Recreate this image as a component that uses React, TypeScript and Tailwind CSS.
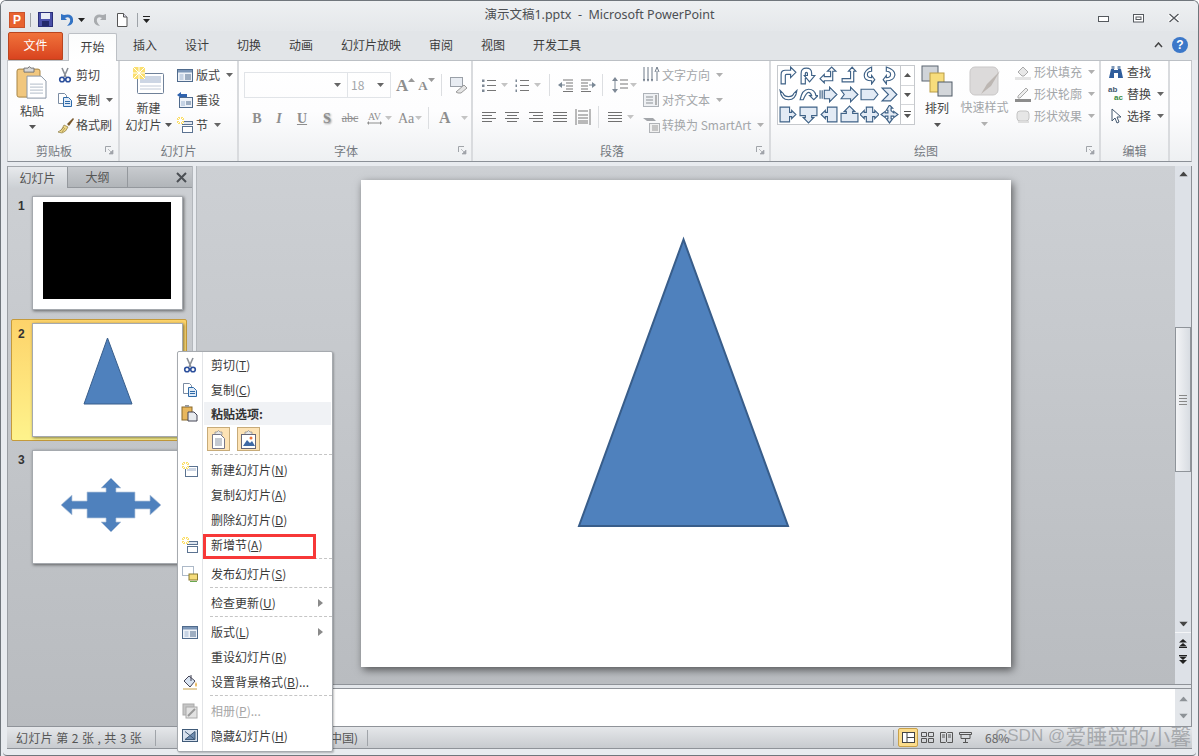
import React from "react";

const Caret = ({ c = "#555", cls = "" }: { c?: string; cls?: string }) => (
  <svg width="7" height="4" viewBox="0 0 7 4" className={`shrink-0 ${cls}`}><path d="M0 0h7L3.5 4z" fill={c} /></svg>
);

const Sv = ({ s = 16, w, h, vb, children, cls = "" }: { s?: number; w?: number; h?: number; vb?: string; children: React.ReactNode; cls?: string }) => (
  <svg width={w ?? s} height={h ?? s} viewBox={vb ?? `0 0 ${s} ${s}`} className={`shrink-0 ${cls}`}>{children}</svg>
);

const Cut = () => (
  <Sv>
    <path d="M5 1l4 9M11 1L7 10" stroke="#8a8f96" strokeWidth="1.6" fill="none" />
    <circle cx="5" cy="12.5" r="2.3" fill="none" stroke="#2b4f9c" strokeWidth="1.6" />
    <circle cx="11" cy="12.5" r="2.3" fill="none" stroke="#2b4f9c" strokeWidth="1.6" />
  </Sv>
);
const Copy = () => (
  <Sv>
    <path d="M1.5 1.5h6l2 2v8h-8z" fill="#fff" stroke="#7b8ca3" />
    <path d="M6.5 5.5h5l3 3v6h-8z" fill="#dfeaf7" stroke="#2e6aa8" />
    <path d="M8 9.5h5M8 11.5h5" stroke="#2e6aa8" />
  </Sv>
);
const Brush = () => (
  <Sv s={18}>
    <path d="M10 8l6-6 1 1-5 7z" fill="#7a5a2e" />
    <path d="M1 16q4-1 6-7l4 2q-2 5-6 6z" fill="#f0d98a" stroke="#8a7a40" strokeWidth=".7" />
    <path d="M3 15l4-4M5 16l3-4" stroke="#9a8440" strokeWidth=".7" />
  </Sv>
);
const Clip = ({ s = 32 }: { s?: number }) => (
  <Sv w={s} h={s * 1.1} vb="0 0 32 35">
    <rect x="1" y="4" width="23" height="28" rx="2" fill="#f1c77e" stroke="#a78544" />
    <path d="M8 3h4q1-3 3 0h3v4H8z" fill="#d8d8d8" stroke="#777" />
    <path d="M11 11h14l5 5v17H11z" fill="#fff" stroke="#8a96a5" />
    <path d="M14 19h13M14 22h13M14 25h13M14 28h13" stroke="#b3bcc8" />
  </Sv>
);
const Spark = ({ x = 0, y = 0, r = 6 }: { x?: number; y?: number; r?: number }) => (
  <g>
    <rect x={x} y={y} width={r * 2} height={r * 2} fill="#fbdf6e" />
    <path d={`M${x} ${y}l${r * 2} ${r * 2}M${x + r * 2} ${y}l${-r * 2} ${r * 2}M${x + r} ${y}v${r * 2}M${x} ${y + r}h${r * 2}`} stroke="#fff" />
  </g>
);
const NewSlideBig = () => (
  <Sv w={31} h={28} vb="0 0 31 28">
    <rect x="4.5" y="6.5" width="26" height="20" rx="1" fill="#fff" stroke="#6f8199" />
    <rect x="7" y="9" width="21" height="7" fill="#cdd6e4" />
    <path d="M7 19h21M7 22h21" stroke="#c3cbd8" />
    <Spark r={6} />
  </Sv>
);
const LayoutIc = () => (
  <Sv>
    <rect x=".5" y="2.5" width="15" height="12" fill="#eef2f8" stroke="#4f6a8c" />
    <path d="M1 3h14v2.5H1z" fill="#7d97b8" />
    <rect x="2.5" y="7" width="4" height="6" fill="#c6d3e4" />
    <path d="M8 8h6M8 10h6M8 12h6" stroke="#4f6a8c" />
  </Sv>
);
const ResetIc = () => (
  <Sv>
    <rect x="2.5" y="5.5" width="13" height="10" fill="#eef2f8" stroke="#4f6a8c" />
    <rect x="4" y="9" width="4" height="5" fill="#c6d3e4" />
    <path d="M9 10h5M9 12h5" stroke="#4f6a8c" />
    <path d="M0 3l4-3v2h6v3H4v1z" fill="#2e62ae" />
  </Sv>
);
const SectionIc = () => (
  <Sv>
    <rect x="5.5" y="4.5" width="10" height="3" fill="#dfe6f0" stroke="#5b7391" />
    <rect x="5.5" y="9.5" width="10" height="6" fill="#fff" stroke="#5b7391" />
    <Spark r={3.5} />
  </Sv>
);
const FileIc = () => (
  <Sv s={14}>
    <path d="M2.5.5h6l3.5 3.5v9.5h-9.5z" fill="#fff" stroke="#555" />
    <path d="M8.5.5V4H12" fill="#dde" stroke="#555" />
  </Sv>
);
const Lines = ({ kind, w = 14 }: { kind: "l" | "c" | "r" | "j"; w?: number }) => {
  const seq = [0, 1, 2, 3];
  return (
    <Sv w={w} h={10} vb={`0 0 ${w} 10`}>
      {seq.map((i) => {
        const short = i % 2 === 1;
        const len = kind === "j" || !short ? w : w - 4;
        const x = kind === "l" || kind === "j" ? 0 : kind === "r" ? w - len : (w - len) / 2;
        return <path key={i} d={`M${x} ${i * 3 + 0.5}h${len}`} stroke="#707070" />;
      })}
    </Sv>
  );
};
const Bul = ({ n }: { n?: boolean }) => (
  <Sv w={14} h={13} vb="0 0 14 13">
    {[1.5, 6.5, 11.5].map((y) => (
      <g key={y}>
        <rect x={n ? 0.5 : 0} y={y - 1} width={n ? 1.5 : 2.5} height={2.5} fill="#7d8895" />
        <path d={`M5 ${y}h9`} stroke="#777" />
      </g>
    ))}
  </Sv>
);
const Indent = ({ flip }: { flip?: boolean }) => (
  <Sv w={16} h={13} vb="0 0 16 13" cls={flip ? "-scale-x-100" : ""}>
    <path d="M5 1h10M8 4h7M8 7h7M8 10h7M5 12.5h10" stroke="#777" />
    <path d="M0 6l4-3v6z" fill="#7a8896" />
    <path d="M2 6h5" stroke="#7a8896" />
  </Sv>
);
const Gal: string[] = [
  "M2 17V8q0-4 4-4h5V1l5 5-5 5V8H7q-1 0-1 1v8z",
  "M2 17V7q0-5 5-5t5 5v2h3l-5 6-5-6h3V7q0-1-1-1t-1 1v10z",
  "M1 12l4-4v2h6V5H8l4-4 4 4h-3v9H5v2z",
  "M2 12h8V5H8l3.5-4L15 5h-2v10H2z",
  "M11 1v4Q7 5 7 8t4 3v-2l3 4-3 4v-3Q4 14 4 9t7-8z",
  "M6 1v4q4 0 4 3T6 11V9l-3 4 3 4v-3q7 0 8-5T6 1z",
  "M1 5q1 9 8 9t8-9l-3 3q-1 3-5 3T4 8z",
  "M1 14q2-10 8-10t7 6h2l-4 4-4-4h2q-1-3-3-3t-5 7z",
  "M1 5v8M3 5v8M5 5h5V2l7 7-7 7v-3H5z",
  "M1 5h9V2l7 7-7 7v-3H1l3-4z",
  "M1 4h12l4 5-4 5H1z",
  "M2 3h8l6 6-6 6H2l6-6z",
  "M1 2h9v5h2V5l4 4-4 4v-2h-2v5H1z",
  "M1 2h16v8h-5v2h2l-5 5-5-5h2v-2H1z",
  "M17 2H8v5H6V5L2 9l4 4v-2h2v5h9z",
  "M1 16h16V8h-5V6h2L9 1 4 6h2v2H1z",
  "M6 2h6v5h2V5l4 4-4 4v-2h-2v5H6v-5H4v2L0 9l4-4v2h2z",
  "M9 0l3 3h-1.5v2.5L13 7.500V6l4 3-4 3v-1.500h-2.500L10.500 13H12l-3 4-3-4h1.500v-2.500H5V12L1 9l4-3v1.500h2.500V5H6z",
];

const Launcher = () => (
  <svg width="9" height="9" viewBox="0 0 9 9" className="absolute right-[4px] top-[6px]">
    <path d="M.5 6V.5H6" stroke="#a0a4a9" fill="none" />
    <path d="M3 3l4 4M8 4v4H4z" stroke="#a0a4a9" fill="#a0a4a9" strokeWidth=".7" />
  </svg>
);

const Group = ({ w, label, launcher, children }: { w: string; label: string; launcher?: boolean; children: React.ReactNode }) => (
  <div className={`${w} shrink-0 flex flex-col border-r-2 border-[#d9dbde]`}>
    <div className="h-[80px] flex">{children}</div>
    <div className={`relative h-[21px] flex items-center justify-center text-[12px] text-[#74797f] ${launcher ? "pr-[18px]" : ""}`}>
      {label}
      {launcher && <Launcher />}
    </div>
  </div>
);

const RowBtn = ({ icon, label, caret, dis, iw = 19 }: { icon: React.ReactNode; label: string; caret?: boolean; dis?: boolean; iw?: number }) => (
  <div className={`h-[25px] flex items-center text-[12px] whitespace-nowrap ${dis ? "text-[#a3a6a9]" : "text-[#444]"}`}>
    <span style={{ width: iw }} className="flex items-center shrink-0">{icon}</span>
    <span>{label}</span>
    {caret && <Caret c={dis ? "#b0b0b0" : "#666"} cls="ml-[6px]" />}
  </div>
);

const U = ({ t, k, after = "" }: { t: string; k: string; after?: string }) => (
  <span>{t}(<span className="underline">{k}</span>){after}</span>
);

const Sep = () => <div className="h-[3px] ml-[32px] border-t border-dashed border-[#c5c5c5] mt-[1px]" />;

const MI = ({ h = "h-[25px]", icon, children, arrow, dis }: { h?: string; icon?: React.ReactNode; children: React.ReactNode; arrow?: boolean; dis?: boolean }) => (
  <div className={`${h} flex items-center text-[12px] ${dis ? "text-[#a6a6a6]" : "text-[#3a3a3a]"}`}>
    <span className="w-[23px] flex justify-center shrink-0">{icon}</span>
    <span className="ml-[10px] flex-1">{children}</span>
    {arrow && <svg width="5" height="8" viewBox="0 0 5 8" className="mr-[9px]"><path d="M0 0l5 4-5 4z" fill="#8a8a8a" /></svg>}
  </div>
);

const PasteOpt = ({ pic }: { pic?: boolean }) => (
  <span className="w-[23px] h-[24px] flex items-center justify-center bg-[#fde3b5] border border-[#c7ab79]">
    <svg width="17" height="21" viewBox="0 0 17 21">
      <path d="M5 3h2q1.500-3 3 0h2v3H5z" fill="#e4e4e4" stroke="#888" strokeWidth=".7" />
      {pic ? (
        <>
          <rect x="1.500" y="5.500" width="14" height="14" fill="#fff" stroke="#667" />
          <path d="M3 17l4-6 3 3 2-2 3 5z" fill="#3f6aa5" />
          <circle cx="11" cy="9" r="1.500" fill="#e8743b" />
        </>
      ) : (
        <>
          <path d="M2.500 5.500h8l4 4v10h-12z" fill="#fff" stroke="#778" />
          <path d="M5 10h7M5 12h7M5 14h7M5 16h7" stroke="#8a94a3" />
        </>
      )}
    </svg>
  </span>
);

const Thumb = ({ children }: { children: React.ReactNode }) => (
  <div className="ml-[20px] w-[151px] h-[114px] bg-white shadow-[1px_1px_3px_rgba(0,0,0,0.5)] border border-[#a5a9ae] flex items-center justify-center">
    {children}
  </div>
);

const Cross = () => (
  <svg width="100" height="54" viewBox="0 0 100 54" className="ml-[6px] mb-[4px]">
    <path d="M0 27L11 17v6h15V14h19V10h-5L50 0l10 10h-5v4h19v9h15v-6l11 10-11 10v-6H74v9H55v4h5L50 54 40 44h5v-4H26v-9H11v6z" fill="#4f81bd" stroke="#b9c8dc" strokeWidth=".7" />
  </svg>
);

export default function App() {
  return (
    <div className="relative w-[1199px] h-[756px] overflow-hidden bg-[#e8ebef] border-t border-x border-[#70767c] rounded-t-[6px] font-['Noto_Sans_CJK_SC','Liberation_Sans',sans-serif] flex flex-col">
      {/* title bar */}
      <div className="h-[30px] shrink-0 grid grid-cols-[1fr_auto_1fr] items-center bg-gradient-to-b from-[#eef0f2] to-[#e4e7ea]">
        <div className="flex items-center pl-[8px] pt-[7px]">
          <span className="w-[16px] h-[16px] bg-[#e8632f] border border-[#c9532a] text-white text-[12px] font-bold leading-[14px] text-center font-['Liberation_Sans',sans-serif]">P</span>
          <span className="w-px h-[14px] bg-[#9ea3a8] ml-[5px]" />
          <Sv s={15} cls="ml-[7px]">
            <rect x=".5" y=".5" width="14" height="14" fill="#4a50a8" stroke="#2a2f78" />
            <rect x="3" y="1" width="9" height="6" fill="#e9ecf5" />
            <rect x="4" y="9" width="7" height="5" fill="#23296a" />
          </Sv>
          <Sv w={14} h={14} vb="0 0 14 14" cls="ml-[7px]">
            <path d="M1 1v6h6L5 5q4-2 5 1t-3 7q7-1 6-7T4 2z" fill="#3273c4" />
          </Sv>
          <Caret c="#222" cls="ml-[4px]" />
          <Sv w={14} h={14} vb="0 0 14 14" cls="ml-[8px] -scale-x-100">
            <path d="M1 1v6h6L5 5q4-2 5 1t-3 7q7-1 6-7T4 2z" fill="#a8abae" />
          </Sv>
          <span className="ml-[8px] flex"><FileIc /></span>
          <span className="w-px h-[14px] bg-[#9ea3a8] ml-[8px]" />
          <Sv w={7} h={7} vb="0 0 7 7" cls="ml-[5px]"><path d="M0 0h7v1H0zM0 3h7L3.500 7z" fill="#222" /></Sv>
        </div>
        <div className="text-[12.5px] text-[#4c4f53] pb-[1px] font-['Noto_Sans','Noto_Sans_CJK_SC',sans-serif] whitespace-pre">演示文稿1.pptx  -  Microsoft PowerPoint</div>
        <div className="flex items-center justify-end pr-[18px] pt-[4px] gap-[24px]">
          <svg width="11" height="7" viewBox="0 0 11 7" className="mt-[3px]"><rect x=".5" y=".5" width="10" height="5" fill="#fff" stroke="#55595e" /></svg>
          <svg width="11" height="9" viewBox="0 0 11 9"><rect x=".5" y=".5" width="10" height="7.500" fill="#fff" stroke="#55595e" /><rect x="3" y="3" width="5" height="2.500" fill="none" stroke="#55595e" /></svg>
          <svg width="12" height="10" viewBox="0 0 12 10"><path d="M1 1l10 8M11 1L1 9" stroke="#fff" strokeWidth="3" /><path d="M1.500 1l9 8M10.500 1l-9 8" stroke="#55595e" strokeWidth="1.400" /></svg>
        </div>
      </div>

      {/* tabs */}
      <div className="h-[29px] shrink-0 flex items-end pl-[7px] pr-[6px] bg-[#e2e5e8] text-[12px] text-[#3c3c3c] relative">
        <div className="w-[55px] h-[28px] pb-[2px] rounded-t-[2px] bg-gradient-to-b from-[#f0723a] to-[#d9431f] border border-[#b9451f] text-white flex items-center justify-center">文件</div>
        <div className="ml-[5px] w-[49px] h-[28px] pb-[2px] -mb-px relative z-10 bg-gradient-to-b from-[#fbfcfc] to-white border border-b-0 border-[#bcc0c5] rounded-t-[2px] flex items-center justify-center">开始</div>
        <div className="flex h-[27px] pb-[3px] items-center ml-[2px]">
          {["插入", "设计", "切换", "动画", "幻灯片放映", "审阅", "视图", "开发工具"].map((t) => (
            <span key={t} className="px-[14px]">{t}</span>
          ))}
        </div>
        <div className="ml-auto h-[27px] pb-[3px] flex items-center gap-[9px] pr-[4px]">
          <svg width="9" height="6" viewBox="0 0 9 6"><path d="M1 5l3.500-4L8 5" fill="none" stroke="#444" strokeWidth="1.500" /></svg>
          <span className="w-[16px] h-[16px] rounded-full bg-[#3c78c9] text-white text-[12px] font-bold flex items-center justify-center font-['Liberation_Sans',sans-serif]">?</span>
        </div>
      </div>

      {/* ribbon */}
      <div className="mx-[6px] h-[102px] shrink-0 flex border border-t-[#bcc0c5] border-x-[#c5c8cc] border-b-[#8b9097] bg-gradient-to-b from-white via-[#fdfdfe] to-[#eef0f2]">
        <Group w="w-[112px]" label="剪贴板" launcher>
          <div className="w-[48px] flex flex-col items-center pt-[4px] text-[12px] text-[#444]">
            <Clip />
            <span className="mt-[2px]">粘贴</span>
            <Caret cls="mt-[5px]" />
          </div>
          <div className="pt-[1px] ml-[1px]">
            <RowBtn icon={<Cut />} label="剪切" />
            <RowBtn icon={<Copy />} label="复制" caret />
            <RowBtn icon={<Brush />} label="格式刷" />
          </div>
        </Group>
        <Group w="w-[119px]" label="幻灯片">
          <div className="w-[57px] flex flex-col items-center pt-[6px] text-[12px] text-[#444]">
            <NewSlideBig />
            <span className="mt-[4px] leading-[17px]">新建</span>
            <span className="flex items-center whitespace-nowrap leading-[17px]">幻灯片<Caret cls="ml-[3px]" /></span>
          </div>
          <div className="pt-[1px]">
            <RowBtn icon={<LayoutIc />} label="版式" caret />
            <RowBtn icon={<ResetIc />} label="重设" />
            <RowBtn icon={<SectionIc />} label="节" caret />
          </div>
        </Group>
        <Group w="w-[234px]" label="字体" launcher>
          <div className="pl-[5px] pt-[11px] flex flex-col">
            <div className="flex items-center h-[26px]">
              <div className="w-[104px] h-[26px] border border-[#e1e4e8] flex items-center justify-end pr-[6px]"><Caret c="#666" /></div>
              <div className="w-[43px] h-[26px] border border-l-0 border-[#e1e4e8] flex items-center justify-between pl-[3px] pr-[6px] text-[12px] text-[#a3a6a9]">18<Caret c="#666" /></div>
              <span className="ml-[5px] text-[17px] font-bold text-[#8e8e8e] font-['Liberation_Serif',serif] leading-none">A</span>
              <Caret c="#999" cls="-mt-[10px] rotate-180" />
              <span className="ml-[3px] text-[13px] font-bold text-[#8e8e8e] font-['Liberation_Serif',serif] leading-none">A</span>
              <Caret c="#999" cls="-mt-[10px]" />
              <span className="w-px h-[22px] bg-[#dcdee1] ml-[6px]" />
              <Sv w={17} h={17} vb="0 0 17 17" cls="ml-[8px]">
                <rect x=".5" y=".5" width="12" height="9" fill="#e8ecf2" stroke="#9aa0a8" />
                <path d="M6 15l8-7 3 3-6 5H8z" fill="#e5e5e5" stroke="#9a9a9a" />
              </Sv>
            </div>
            <div className="flex items-center h-[26px] mt-[7px] font-['Liberation_Serif',serif] font-bold text-[#8e8e8e] text-[14px]">
              <span className="ml-[7px] w-[12px] text-center">B</span>
              <span className="ml-[11px] w-[10px] text-center italic">I</span>
              <span className="ml-[12px] w-[12px] text-center underline">U</span>
              <span className="ml-[13px] w-[12px] text-center [text-shadow:1px_1px_2px_#888]">S</span>
              <span className="ml-[8px] w-[18px] text-center line-through text-[12px] font-normal">abc</span>
              <span className="ml-[7px] w-[17px] flex flex-col items-center leading-[9px] text-[10px] font-normal">AV<svg width="15" height="4" viewBox="0 0 15 4"><path d="M0 2l2-2v1.500h11V0l2 2-2 2V2.500H2V4z" fill="#8e8e8e" /></svg></span>
              <Caret c="#c4c4c4" cls="ml-[2px]" />
              <span className="ml-[6px] text-[14px] font-normal w-[15px]">Aa</span>
              <Caret c="#c4c4c4" cls="ml-[2px]" />
              <span className="w-px h-[22px] bg-[#dcdee1] ml-[6px]" />
              <span className="ml-[10px] text-[16px]">A</span>
              <Caret c="#c4c4c4" cls="ml-[10px]" />
            </div>
          </div>
        </Group>
        <Group w="w-[298px]" label="段落" launcher>
          <div className="pl-[9px] pt-[11px] w-[170px] flex flex-col">
            <div className="flex items-center h-[26px]">
              <Bul /><Caret c="#c4c4c4" cls="ml-[5px]" />
              <span className="ml-[7px] flex"><Bul n /></span><Caret c="#c4c4c4" cls="ml-[5px]" />
              <span className="w-px h-[22px] bg-[#dcdee1] ml-[8px]" />
              <span className="ml-[8px] flex"><Indent /></span>
              <span className="ml-[6px] flex"><Indent flip /></span>
              <span className="w-px h-[22px] bg-[#dcdee1] ml-[6px]" />
              <Sv w={16} h={16} vb="0 0 16 16" cls="ml-[9px]">
                <path d="M3 0l3 4H0zM3 16l3-4H0z" fill="#7d8895" />
                <path d="M3 4v8" stroke="#7d8895" />
                <path d="M8 3h8M8 7h8M8 11h8" stroke="#777" />
              </Sv>
              <Caret c="#c4c4c4" cls="ml-[2px]" />
            </div>
            <div className="flex items-center h-[26px] mt-[6px]">
              <Lines kind="l" /><span className="ml-[9px] flex"><Lines kind="c" /></span>
              <span className="ml-[10px] flex"><Lines kind="r" /></span>
              <span className="ml-[10px] flex"><Lines kind="j" /></span>
              <Sv w={16} h={16} vb="0 0 16 16" cls="ml-[8px]">
                <path d="M1 0v16M15 0v16M3 2h10M3 14h10M3 6h10M3 9h10M3 12h10" stroke="#777" />
              </Sv>
              <span className="w-px h-[22px] bg-[#dcdee1] ml-[7px]" />
              <span className="ml-[9px] flex"><Lines kind="j" /></span>
              <Caret c="#c4c4c4" cls="ml-[5px]" />
            </div>
          </div>
          <div className="pt-[1px]">
            <RowBtn dis icon={<Sv w={17} h={16} vb="0 0 17 16"><path d="M1 0v14M5 0v14M9 0v14M14 4v10" stroke="#6f7a88" /><path d="M0 12l1 3 1-3M4 12l1 3 1-3M8 12l1 3 1-3" fill="#6f7a88" /><path d="M12 5l2-5 2 5" fill="none" stroke="#6f7a88" /></Sv>} label="文字方向" caret />
            <RowBtn dis icon={<Sv><rect x=".5" y="1.500" width="15" height="13" fill="#eef0f3" stroke="#aeb3b9" /><path d="M3 5h7M3 8h7M3 11h7" stroke="#8d9297" /><path d="M13 3v10" stroke="#777" /></Sv>} label="对齐文本" caret />
            <RowBtn dis icon={<Sv w={17} h={16} vb="0 0 17 16"><path d="M0 1h10l3 3H4z" fill="#a3a6aa" /><rect x="6.500" y="6.500" width="10" height="9" fill="#f0f0f0" stroke="#b0b3b7" /><path d="M9 9h6M9 11h6M9 13h6" stroke="#999" /></Sv>} label="转换为 SmartArt" caret />
          </div>
        </Group>
        <Group w="w-[330px]" label="绘图" launcher>
          <div className="pl-[6px] pt-[4px]">
            <div className="flex w-[138px] h-[60px] border border-[#c6c9cd] bg-white">
              <div className="w-[122px] grid grid-cols-6 grid-rows-3">
                {Gal.map((d, i) => (
                  <span key={i} className="flex items-center justify-center">
                    <svg width="19" height="19" viewBox="0 0 18 18"><path d={d} fill={i < 8 ? "#fff" : "#e3ebf5"} stroke="#3f6287" strokeWidth="1.100" /></svg>
                  </span>
                ))}
              </div>
              <div className="flex-1 flex flex-col border-l border-[#c6c9cd]">
                <span className="flex-1 flex items-center justify-center border-b border-[#d4d6d9]"><Caret c="#555" cls="rotate-180" /></span>
                <span className="flex-1 flex items-center justify-center border-b border-[#d4d6d9]"><Caret c="#555" /></span>
                <span className="flex-1 flex flex-col items-center justify-center gap-[2px]"><span className="w-[7px] h-px bg-[#555]" /><Caret c="#555" /></span>
              </div>
            </div>
          </div>
          <div className="w-[40px] ml-[2px] pt-[4px] flex flex-col items-center text-[12px] text-[#444]">
            <svg width="32" height="33" viewBox="0 0 32 33">
              <rect x="1" y="1" width="16" height="15" fill="#d0d4d9" stroke="#5a6470" />
              <rect x="9" y="8" width="14" height="19" fill="#f7dd7c" stroke="#b99b45" />
              <rect x="17" y="17" width="14" height="14" fill="#d3d6da" stroke="#4f5a66" />
            </svg>
            <span className="mt-[1px]">排列</span>
            <Caret cls="mt-[6px]" />
          </div>
          <div className="w-[53px] ml-[1px] pt-[5px] flex flex-col items-center text-[12px] text-[#a3a6a9] whitespace-nowrap">
            <svg width="32" height="30" viewBox="0 0 32 30">
              <rect x="1" y="1" width="28" height="28" rx="5" fill="#dcdada" stroke="#c9c7c7" />
              <path d="M12 28l6-10 13-13-9 15z" fill="#bcb6b2" />
            </svg>
            <span className="mt-[2px]">快速样式</span>
            <Caret c="#b0b0b0" cls="mt-[6px]" />
          </div>
          <div className="ml-[4px]">
            <div className="[&>div]:h-[22px]">
              <RowBtn dis iw={19} icon={<Sv><path d="M3 8l5-5 5 5-4 4H7z" fill="#e8e8e8" stroke="#aaa" /><rect y="13" width="16" height="3" fill="#e4e4e4" /></Sv>} label="形状填充" caret />
              <RowBtn dis iw={19} icon={<Sv><path d="M3 10l8-8 2 2-8 8H3z" fill="#eee" stroke="#aaa" /><rect y="13" width="16" height="3" fill="#8c8c8c" /></Sv>} label="形状轮廓" caret />
              <RowBtn dis iw={19} icon={<Sv><rect x="2" y="3" width="12" height="10" rx="3" fill="#e6e6e6" stroke="#c4c4c4" /><path d="M3 14h11" stroke="#ddd" strokeWidth="2" /></Sv>} label="形状效果" caret />
            </div>
          </div>
        </Group>
        <Group w="w-[69px]" label="编辑">
          <div className="pl-[7px] [&>div]:h-[22px]">
            <RowBtn icon={<Sv><path d="M1 14l2-9h3v9zM15 14l-2-9h-3v9z" fill="#2f5d9c" /><rect x="3.500" y="2" width="3" height="3" fill="#7d97b8" /><rect x="9.500" y="2" width="3" height="3" fill="#7d97b8" /><rect x="6" y="6" width="4" height="3" fill="#2f5d9c" /></Sv>} label="查找" />
            <RowBtn icon={<span className="flex flex-col text-[8px] font-bold leading-[8px] font-['Liberation_Sans',sans-serif]"><span className="text-[#44586f]">ab</span><span className="ml-[6px] text-[#3b8a3e]">ac</span></span>} label="替换" caret />
            <RowBtn icon={<Sv><path d="M4 1v12l3-3 2 5 2-1-2-5h4z" fill="#fff" stroke="#44586f" /></Sv>} label="选择" caret />
          </div>
        </Group>
      </div>

      {/* body */}
      <div className="h-[564px] shrink-0 flex pl-[6px] pr-[6px] pt-[4px]">
        {/* left pane */}
        <div className="w-[185px] shrink-0 flex flex-col bg-gradient-to-b from-[#cdd0d4] to-[#b8bbbf] border-l border-[#9a9ea3]">
          <div className="h-[22px] shrink-0 flex items-center text-[12px] text-[#555] border-t border-[#a4a8ad] relative">
            <span className="w-[60px] h-full flex items-center justify-center bg-gradient-to-b from-[#e8eaed] to-[#ccd0d4] border-r border-[#94989d]">幻灯片</span>
            <span className="w-[60px] h-full flex items-center justify-center bg-gradient-to-b from-[#c8cbcf] to-[#b1b5b9] border-r border-[#94989d] border-b">大纲</span>
            <span className="flex-1 h-full flex items-center justify-end pr-[5px] bg-gradient-to-b from-[#c8cbcf] to-[#b1b5b9] border-b border-[#94989d]">
              <svg width="11" height="11" viewBox="0 0 11 11"><path d="M1 1l9 9M10 1l-9 9" stroke="#4b4f54" strokeWidth="2" /></svg>
            </span>
          </div>
          <div className="pt-[4px] pl-[4px] flex flex-col gap-[5px]">
            {[1, 2, 3].map((n) => (
              <div key={n} className={`relative h-[122px] rounded-[2px] flex items-center ${n === 2 ? "w-[176px] border border-[#c59b3c] bg-gradient-to-b from-[#fdd36a] to-[#fef38c] -ml-px" : "w-[175px]"}`}>
                <span className="absolute left-[6px] top-[5px] text-[12px] font-bold text-[#333] font-['Liberation_Sans',sans-serif]">{n}</span>
                <Thumb>
                  {n === 1 && <div className="w-[128px] h-[97px] bg-black mb-[6px] mr-[2px]" />}
                  {n === 2 && (
                    <svg width="50" height="68" viewBox="0 0 50 68" className="-mt-[18px]"><path d="M24.500 1L1 67h48z" fill="#4f81bd" stroke="#385d8a" /></svg>
                  )}
                  {n === 3 && <Cross />}
                </Thumb>
              </div>
            ))}
          </div>
        </div>
        {/* splitter */}
        <div className="w-[5px] shrink-0 bg-[#e8ebef] border-x border-[#b3b7bc]" />
        {/* main */}
        <div className="flex-1 flex flex-col min-w-0 border-r border-[#8c9096]">
          <div className="h-[518px] shrink-0 flex">
            <div className="flex-1 bg-gradient-to-b from-[#cdd0d4] to-[#b9bcc0] pt-[14px] pl-[164px]">
              <div className="w-[650px] h-[487px] bg-white shadow-[2px_3px_8px_rgba(0,0,0,0.55)]">
                <svg width="650" height="487" viewBox="0 0 650 487"><path d="M322.500 59.500L218 346h209z" fill="#4f81bd" stroke="#385d8a" strokeWidth="2" /></svg>
              </div>
            </div>
            <div className="w-[16px] shrink-0 flex flex-col items-center bg-[#dde1e7]">
              <Caret c="#444" cls="mt-[6px] rotate-180 scale-125" />
              <div className="mt-[151px] w-full h-[145px] bg-gradient-to-r from-[#f3f4f6] to-[#d8dce2] border border-[#8f949a] flex flex-col items-center justify-center gap-[2px]">
                <span className="w-[8px] h-px bg-[#888]" /><span className="w-[8px] h-px bg-[#888]" /><span className="w-[8px] h-px bg-[#888]" /><span className="w-[8px] h-px bg-[#888]" />
              </div>
              <Caret c="#444" cls="mt-[150px] scale-125" />
              <div className="mt-[6px] w-full border-t border-[#f4f5f7] pt-[6px] flex flex-col items-center gap-[7px]">
                <svg width="8" height="9" viewBox="0 0 8 9"><path d="M4 0l4 3.500H0zM4 4l4 3.500H0z M0 8h8v1H0z" fill="#222" /></svg>
                <svg width="8" height="9" viewBox="0 0 8 9"><path d="M0 0h8v1H0zM0 1.500h8L4 5zM0 5h8L4 9z" fill="#222" /></svg>
              </div>
            </div>
          </div>
          <div className="h-[5px] shrink-0 bg-[#e3e6ea] border-y border-[#8f9399]" />
          <div className="h-[37px] shrink-0 flex">
            <div className="flex-1 bg-white pl-[24px] pt-[6px] text-[14px] text-black leading-[20px]">单击此处添加备注</div>
            <div className="w-[16px] bg-[#e3e6ea] flex flex-col items-center justify-between py-[8px]">
              <Caret c="#8d9297" cls="rotate-180 scale-125" /><Caret c="#8d9297" cls="scale-125" />
            </div>
          </div>
        </div>
      </div>

      {/* status */}
      <div className="mx-[6px] h-[23px] shrink-0 flex items-center bg-gradient-to-b from-[#e5e7ea] to-[#c8cbcf] border-y border-[#8f9399] text-[12px] text-[#555] whitespace-pre">
        <span className="w-[149px] pl-[9px] border-r border-[#a0a4a9] h-[16px] flex items-center tracking-[0.4px]">幻灯片 第 2 张 , 共 3 张</span>
        <span className="w-[212px] h-[16px] pl-[16px] flex justify-between border-r border-[#a0a4a9] items-center pr-[9px]"><span>“</span><span>中国)</span></span>
        <span className="ml-auto flex items-center">
          <span className="w-px h-[16px] bg-[#a0a4a9] mr-[4px]" />
          <span className="w-[20px] h-[19px] bg-[#fcdc8b] border border-[#c8a14b] rounded-[2px] flex items-center justify-center">
            <svg width="13" height="11" viewBox="0 0 13 11"><rect x=".5" y=".5" width="12" height="10" fill="#fff" stroke="#444" /><path d="M5 .5v10M5 5.500h7" stroke="#444" /></svg>
          </span>
          <svg width="13" height="11" viewBox="0 0 13 11" className="ml-[3px]"><path d="M.5.5h5v4h-5zM7.500.5h5v4h-5zM.5 6.500h5v4h-5zM7.500 6.500h5v4h-5z" fill="none" stroke="#555" /></svg>
          <svg width="13" height="11" viewBox="0 0 13 11" className="ml-[6px]"><path d="M.5.5h5l1 1 1-1h5v10h-5l-1-1-1 1h-5zM6.500 1.500v8M2 3h3M2 5h3M8 3h3M8 5h3" fill="none" stroke="#555" /></svg>
          <svg width="13" height="11" viewBox="0 0 13 11" className="ml-[6px]"><path d="M.5.5h12v2h-12zM2 2.500h9v4H2zM6.500 6.500V10M4 10.500h5" fill="none" stroke="#555" /></svg>
          <span className="ml-[13px] w-[207px] text-[#666]">68%</span>
        </span>
      </div>
      <div className="flex-1 mx-[2px] border-b border-[#70767c] rounded-b-[4px]" />

      {/* context menu */}
      <div className="absolute left-[176px] top-[350px] w-[156px] h-[401px] bg-white border border-[#a6aaaf] rounded-[2px] shadow-[1px_1px_2px_rgba(0,0,0,0.25)] py-px">
        <div className="absolute left-[24px] top-0 bottom-0 w-px bg-[#e2e4e7]" />
        <div className="-mt-px"><MI icon={<Cut />}><U t="剪切" k="T" /></MI></div>
        <MI icon={<Copy />}><U t="复制" k="C" /></MI>
        <div className="h-[23px] flex items-center text-[12px] font-bold text-[#333]">
          <span className="w-[23px] flex justify-center">
            <Sv s={17}><rect x="1" y="2" width="10" height="13" fill="#e9b75c" stroke="#8a6a2a" /><path d="M4 2h4V0H4z" fill="#999" /><path d="M7 7h6l3 3v6H7z" fill="#e8ebef" stroke="#445" /></Sv>
          </span>
          <span className="ml-[3px] pl-[7px] flex-1 h-full mr-px flex items-center bg-[#f0f2f5]">粘贴选项:</span>
        </div>
        <div className="h-[28px] flex items-center pl-[29px] gap-[7px]"><PasteOpt /><PasteOpt pic /></div>
        <Sep />
        <MI icon={<Sv><rect x="3.500" y="4.500" width="12" height="10" fill="#fff" stroke="#5b7391" /><rect x="5" y="6" width="9" height="3" fill="#cdd6e4" /><Spark r={3.500} /></Sv>}><U t="新建幻灯片" k="N" /></MI>
        <MI><U t="复制幻灯片" k="A" /></MI>
        <MI><U t="删除幻灯片" k="D" /></MI>
        <MI icon={<SectionIc />}><U t="新增节" k="A" /></MI>
        <Sep />
        <MI icon={<Sv><rect x=".5" y=".5" width="11" height="9" fill="none" stroke="#5b7391" strokeDasharray="1 1" /><rect x="7" y="8" width="8.500" height="6" fill="#f5dc7b" stroke="#8a7a30" /><path d="M8 15.500h7" stroke="#6aa84f" /></Sv>}><U t="发布幻灯片" k="S" /></MI>
        <Sep />
        <MI arrow><U t="检查更新" k="U" /></MI>
        <Sep />
        <MI arrow icon={<LayoutIc />}><U t="版式" k="L" /></MI>
        <MI><U t="重设幻灯片" k="R" /></MI>
        <MI icon={<Sv><path d="M2 7l5-5 6 5-5 6z" fill="#d9e4f2" stroke="#445" /><path d="M9 1v6" stroke="#445" /><path d="M14 8q2 3 0 5-2-2 0-5z" fill="#e9b75c" /><path d="M1 15h14" stroke="#c8a14b" /></Sv>}><U t="设置背景格式" k="B" after="..." /></MI>
        <Sep />
        <MI dis icon={<Sv><rect x="1" y="1" width="11" height="11" fill="#c6c6c6" stroke="#aaa" /><rect x="4" y="4" width="11" height="11" fill="#e2e2e2" stroke="#aaa" /><path d="M6 13l7-7" stroke="#999" strokeWidth="2" /></Sv>}><U t="相册" k="P" after="..." /></MI>
        <MI icon={<Sv><rect x=".5" y="1.500" width="15" height="12" fill="#d6e0ed" stroke="#3f5a78" /><path d="M3 3.500l10 8M13 3.500v8H3z" fill="#6f8cb0" stroke="#3f5a78" /></Sv>}><U t="隐藏幻灯片" k="H" /></MI>
      </div>

      {/* red annotation */}
      <div className="absolute left-[202px] top-[533px] w-[113px] h-[25px] border-[3px] border-[#f73838]" />

      {/* watermark */}
      <div className="absolute left-[994px] top-[721px] h-[28px] flex items-center text-[#8a8d91]/65 whitespace-nowrap">
        <span className="text-[17px] font-['Liberation_Sans',sans-serif] whitespace-pre">CSDN @</span>
        <span className="text-[21px] font-['Noto_Sans_CJK_SC',sans-serif]">爱睡觉的小馨</span>
      </div>
    </div>
  );
}
